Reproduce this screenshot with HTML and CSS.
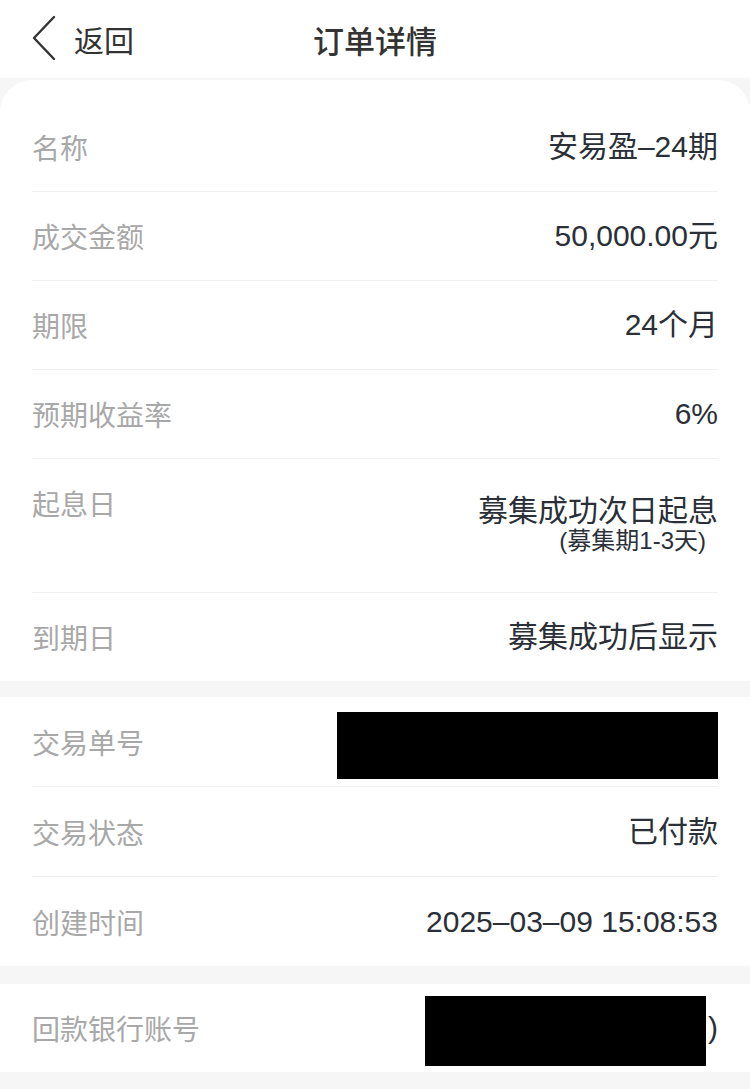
FILE: index.html
```html
<!DOCTYPE html>
<html lang="zh-CN">
<head>
  <meta charset="UTF-8" />
  <meta name="viewport" content="width=device-width, initial-scale=1.0"/>
  <title>订单详情</title>
  <link rel="stylesheet" href="styles.css">
</head>
<body>
  <div class="header">
    <div class="back">
      <svg class="chevron" width="26" height="46" viewBox="0 0 26 46">
        <path d="M23 2 L3 23 L23 44" fill="none" stroke="#333" stroke-width="2.4" stroke-linecap="round" stroke-linejoin="round"/>
      </svg>
      <span>返回</span>
    </div>
    <div class="title">订单详情</div>
  </div>

  <div class="card first">
    <div class="row"><span class="label">名称</span><span class="value">安易盈–24期</span></div>
    <div class="row"><span class="label">成交金额</span><span class="value">50,000.00元</span></div>
    <div class="row"><span class="label">期限</span><span class="value">24个月</span></div>
    <div class="row"><span class="label">预期收益率</span><span class="value">6%</span></div>
    <div class="row tall">
      <span class="label">起息日</span>
      <div class="value multi">
        <div class="main">募集成功次日起息</div>
        <div class="sub">(募集期1-3天)</div>
      </div>
    </div>
    <div class="row"><span class="label">到期日</span><span class="value">募集成功后显示</span></div>
  </div>

  <div class="card trade">
    <div class="row"><span class="label">交易单号</span><span class="redact order-no"></span></div>
    <div class="row"><span class="label">交易状态</span><span class="value">已付款</span></div>
    <div class="row"><span class="label">创建时间</span><span class="value">2025–03–09 15:08:53</span></div>
  </div>

  <div class="card">
    <div class="row"><span class="label">回款银行账号</span><span class="value bank"><span class="redact bank-no"></span>)</span></div>
  </div>
</body>
</html>
```

FILE: styles.css
```css
body {
  margin: 0;
  background: #f6f6f6;
  font-family: "Noto Sans CJK SC", sans-serif;
  color: #2f323a;
}
.header {
  position: relative;
  height: 78px;
  background: #fff;
  display: flex;
  align-items: center;
  justify-content: center;
}
.back {
  position: absolute;
  left: 31px;
  top: 14px;
  display: flex;
  align-items: center;
  gap: 17px;
  font-size: 30px;
  color: #333;
}
.back span {
  line-height: 46px;
  margin-top: 2px;
}
.title {
  font-size: 31px;
  font-weight: 500;
  color: #333;
}
.card {
  background: #fff;
  padding: 0 32px;
  margin-bottom: 16px;
}
.card.first {
  margin-top: 2px;
  padding-top: 23px;
  border-radius: 32px 32px 0 0;
  margin-bottom: 16px;
}
.card.trade {
  margin-bottom: 18px;
}
.card.trade .row {
  padding: 27px 0 26px;
}
.row {
  display: flex;
  justify-content: space-between;
  align-items: center;
  padding: 26px 0;
  height: 36px;
  border-bottom: 1px solid #f0f0f0;
}
.row:last-child {
  border-bottom: none;
}
.label {
  font-size: 28px;
  line-height: 36px;
  color: #a8a8a8;
}
.value {
  font-family: "Liberation Sans", "Noto Sans CJK SC", sans-serif;
  font-size: 30px;
  line-height: 36px;
  color: #2b2f37;
}
.row.tall {
  height: auto;
  align-items: flex-start;
  padding-bottom: 37px;
}
.multi {
  margin-top: 10px;
  text-align: right;
}
.multi .main {
  line-height: 32px;
}
.multi .sub {
  font-size: 24px;
  line-height: 28px;
  margin-right: 12px;
}
.redact {
  display: block;
  background: #000;
}
.order-no {
  width: 381px;
  height: 67px;
  margin: -10px 0 -16px;
}
.bank {
  display: flex;
  align-items: center;
}
.bank-no {
  width: 281px;
  height: 70px;
  margin: -14px 2px -20px 0;
}
```
